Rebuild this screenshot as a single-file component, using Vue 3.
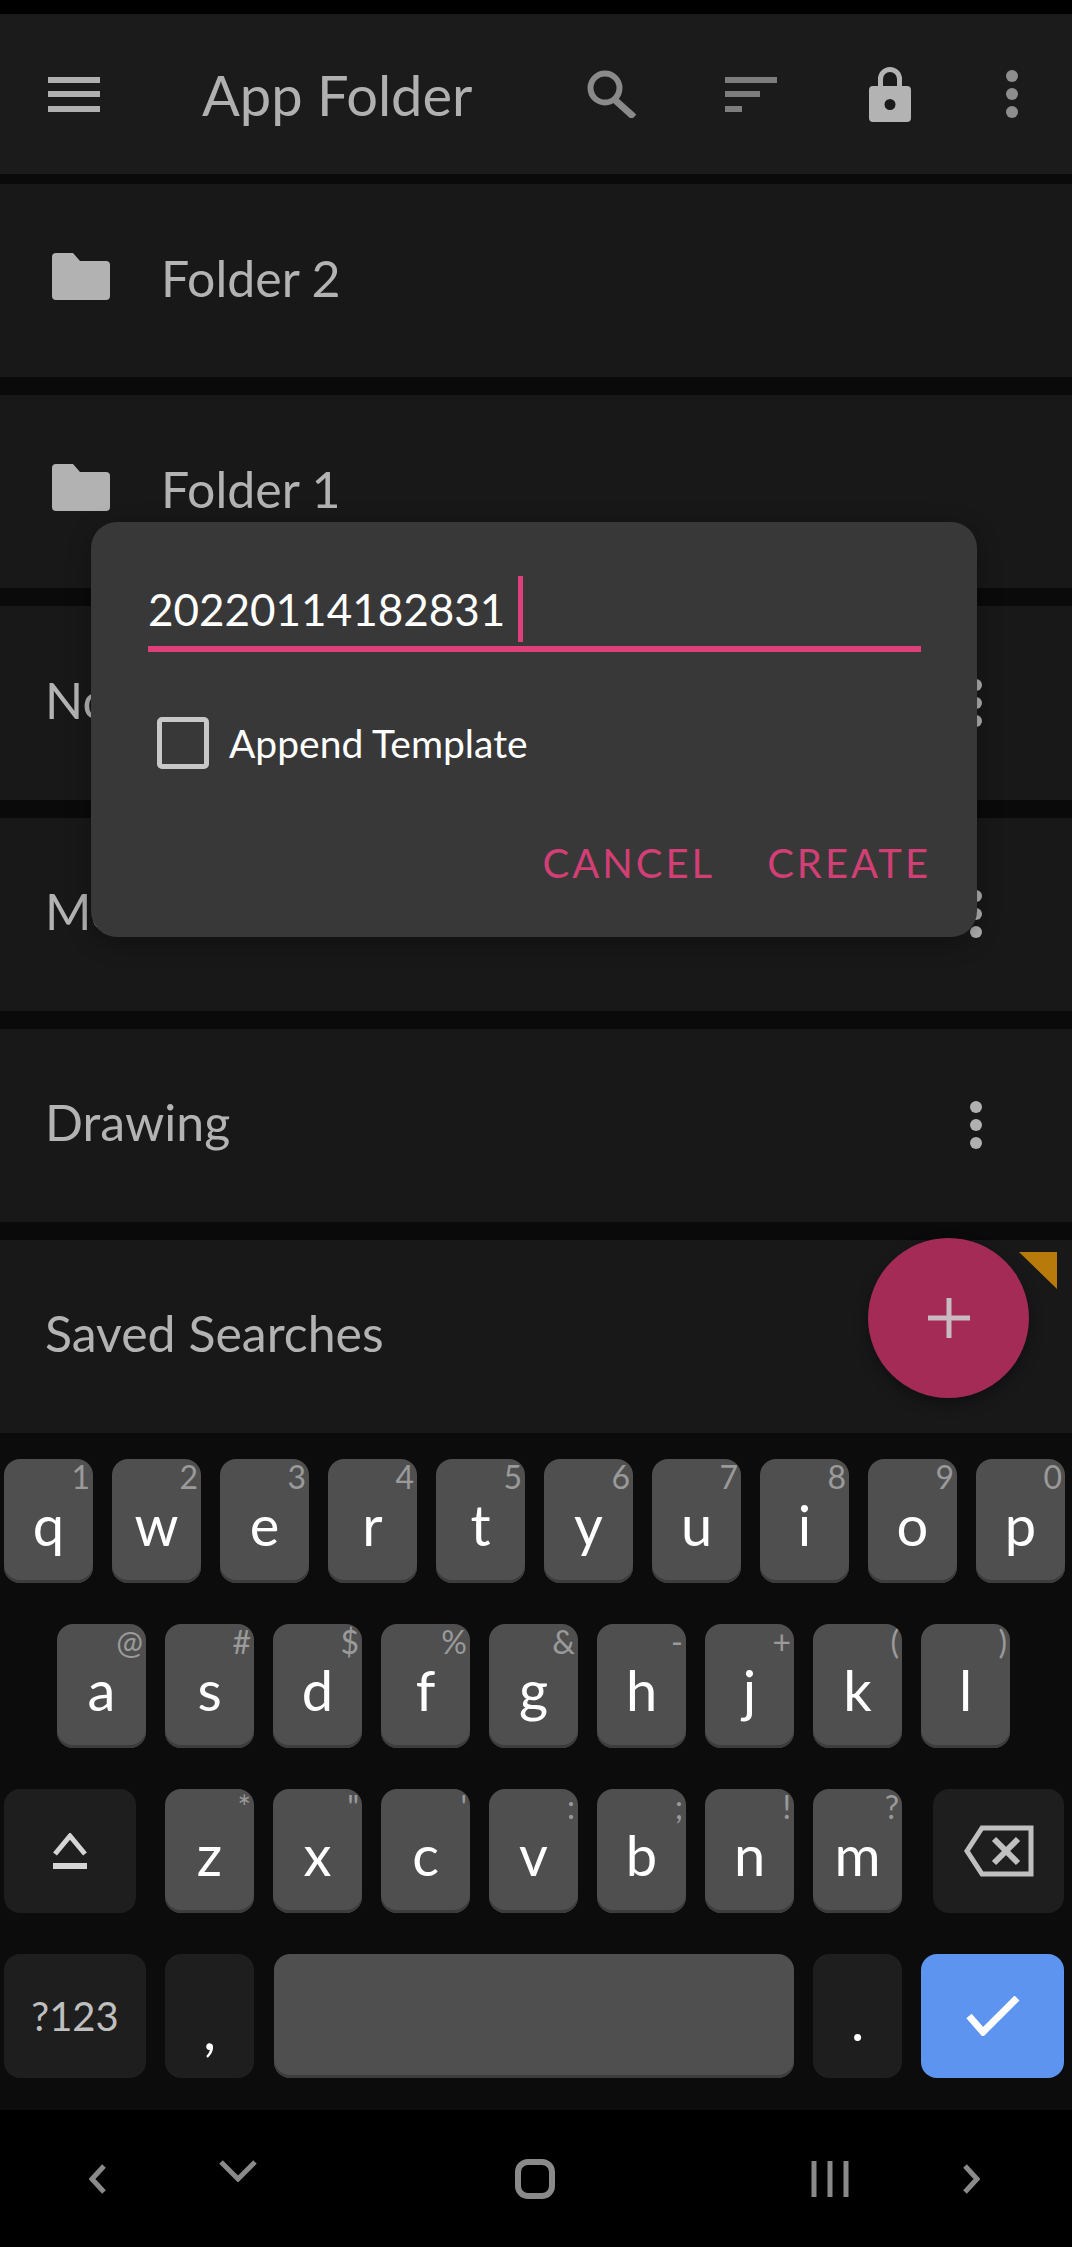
<template>
  <div class="screen">
    <div class="status"></div>

    <header class="appbar">
      <svg class="ic-menu" width="52" height="35" viewBox="0 0 52 35"><path d="M0 0h52v6H0zM0 14h52v6H0zM0 29h52v6H0z" fill="#b0b0b0" /></svg>
      <span class="title">App Folder</span>
      <svg class="ic-search" width="52" height="48" viewBox="0 0 52 48">
        <circle cx="18" cy="18" r="14.5" fill="none" stroke="#8a8a8a" stroke-width="6" />
        <path d="M28 30l19 17" stroke="#8a8a8a" stroke-width="7" fill="none" />
      </svg>
      <svg class="ic-sort" width="52" height="35" viewBox="0 0 52 35"><path d="M0 0h52v6H0zM0 14h35v6H0zM0 29h17v6H0z" fill="#7d7d7d" /></svg>
      <svg class="ic-lock" width="42" height="56" viewBox="0 0 42 56">
        <path fill-rule="evenodd" d="M9 20v-7a12 12 0 0 1 24 0v7h5a4 4 0 0 1 4 4v28a4 4 0 0 1-4 4H4a4 4 0 0 1-4-4V24a4 4 0 0 1 4-4zm5 0h14v-7a7 7 0 0 0-14 0zm7 13a5.500 5.500 0 1 0 0 11 5.500 5.500 0 0 0 0-11z" fill="#b3b3b3" />
      </svg>
      <div class="dots dim"><i></i><i></i><i></i></div>
    </header>

    <main class="list">
      <div v-for="row in rows" :key="row.name" class="card">
        <svg v-if="row.folder" class="ic-folder" width="58" height="47" viewBox="0 0 58 47">
          <path d="M4 0h17l7 8h26a4 4 0 0 1 4 4v31a4 4 0 0 1-4 4H4a4 4 0 0 1-4-4V4a4 4 0 0 1 4-4z" fill="#b2b2b2" />
        </svg>
        <span class="card-name">{{ row.name }}</span>
        <div v-if="!row.folder && row.menu" class="dots card-dots"><i></i><i></i><i></i></div>
      </div>
    </main>

    <div class="keyboard">
      <div class="key-row row-one">
        <div v-for="k in rowOne" :key="k[0]" class="key">
          <span class="hint">{{ k[1] }}</span>
          <span class="letter">{{ k[0] }}</span>
        </div>
      </div>
      <div class="key-row row-two">
        <div v-for="k in rowTwo" :key="k[0]" class="key">
          <span class="hint">{{ k[1] }}</span>
          <span class="letter">{{ k[0] }}</span>
        </div>
      </div>
      <div class="key-row row-three">
        <div class="key dark shift">
          <svg width="34" height="36" viewBox="0 0 34 36">
            <path d="M2 21L17 3l15 18" fill="none" stroke="#d5d5d5" stroke-width="5" />
            <path d="M0 30h34v6H0z" fill="#d5d5d5" />
          </svg>
        </div>
        <div class="letters">
          <div v-for="k in rowThree" :key="k[0]" class="key">
            <span class="hint">{{ k[1] }}</span>
            <span class="letter">{{ k[0] }}</span>
          </div>
        </div>
        <div class="key dark backspace">
          <svg width="70" height="52" viewBox="0 0 70 52">
            <path d="M67 3H18L3 26l15 23h49z" fill="none" stroke="#c0c0c0" stroke-width="5" />
            <path d="M30 14l24 24M54 14L30 38" fill="none" stroke="#c0c0c0" stroke-width="6" />
          </svg>
        </div>
      </div>
      <div class="key-row row-four">
        <div class="key dark sym">?123</div>
        <div class="key dark punct"><span class="mark">,</span></div>
        <div class="key space"></div>
        <div class="key dark punct"><span class="mark period">.</span></div>
        <div class="key enter">
          <svg width="54" height="40" viewBox="0 0 54 40">
            <path d="M3 20l14 16L51 2" fill="none" stroke="#fff" stroke-width="7" />
          </svg>
        </div>
      </div>
    </div>

    <nav class="navbar">
      <svg width="18" height="30" viewBox="0 0 18 30"><path d="M15 2L3 15l12 13" fill="none" stroke="#8a8a8a" stroke-width="5" /></svg>
      <svg class="nav-down" width="38" height="22" viewBox="0 0 38 22"><path d="M2 2l17 17L36 2" fill="none" stroke="#8a8a8a" stroke-width="5" /></svg>
      <svg class="nav-home" width="40" height="40" viewBox="0 0 40 40"><rect x="3" y="3" width="34" height="34" rx="10" fill="none" stroke="#8a8a8a" stroke-width="6" /></svg>
      <svg class="nav-recent" width="38" height="36" viewBox="0 0 38 36"><path d="M3 0v36M19 0v36M35 0v36" stroke="#8a8a8a" stroke-width="5" /></svg>
      <svg class="nav-fwd" width="18" height="30" viewBox="0 0 18 30"><path d="M3 2l12 13L3 28" fill="none" stroke="#8a8a8a" stroke-width="5" /></svg>
    </nav>

    <!-- Overlays -->
    <div class="dialog">
      <div class="field">
        <span class="field-value">20220114182831</span>
        <span class="caret"></span>
      </div>
      <label class="check-row">
        <span class="checkbox"></span>
        <span class="check-label">Append Template</span>
      </label>
      <div class="actions">
        <span class="action">CANCEL</span>
        <span class="action">CREATE</span>
      </div>
    </div>

    <button class="fab">
      <svg width="42" height="40" viewBox="0 0 42 40"><path d="M18.500 0h5v17.500h18.500v5H23.500v17.500h-5V22.500H0v-5h18.500z" fill="#c9b9c0" /></svg>
    </button>
    <svg class="corner" width="38" height="37" viewBox="0 0 38 37"><path d="M0 0h38v37z" fill="#b87a0a" /></svg>
  </div>
</template>

<script setup>
const rows = [
  { name: 'Folder 2', folder: true },
  { name: 'Folder 1', folder: true },
  { name: 'Notes', menu: true },
  { name: 'Mobile', menu: true },
  { name: 'Drawing', menu: true },
  { name: 'Saved Searches' }
]

const rowOne = [['q', '1'], ['w', '2'], ['e', '3'], ['r', '4'], ['t', '5'], ['y', '6'], ['u', '7'], ['i', '8'], ['o', '9'], ['p', '0']]
const rowTwo = [['a', '@'], ['s', '#'], ['d', '$'], ['f', '%'], ['g', '&'], ['h', '-'], ['j', '+'], ['k', '('], ['l', ')']]
const rowThree = [['z', '*'], ['x', '"'], ['c', "'"], ['v', ':'], ['b', ';'], ['n', '!'], ['m', '?']]
</script>

<style>
html, body { margin: 0; background: #000; }
</style>

<style scoped>
.screen {
  position: relative;
  display: flex;
  flex-direction: column;
  width: 1072px;
  height: 2247px;
  overflow: hidden;
  background: #0a0a0a;
  font-family: Lato, sans-serif;
}

.status { height: 14px; background: #000; }

.appbar {
  display: flex;
  align-items: center;
  height: 160px;
  padding: 0 54px 0 48px;
  box-sizing: border-box;
  background: #1b1b1b;
}
.title { margin-left: 102px; font-size: 56px; color: #b0b0b0; flex: 1; }
.ic-search { margin-right: 86px; }
.ic-sort { margin-right: 92px; }
.ic-lock { margin-right: 95px; }

.dots { display: flex; flex-direction: column; gap: 6px; }
.dots i { display: block; width: 12px; height: 12px; border-radius: 50%; background: #b0b0b0; }
.dots.dim i { background: #8e8e8e; }
.card-dots { margin-top: 6px; }

.list {
  display: flex;
  flex-direction: column;
  gap: 18px;
  height: 1249px;
  margin-top: 10px;
}
.card {
  flex: 1;
  display: flex;
  align-items: center;
  padding: 0 90px 6px 45px;
  background: #181818;
}
.ic-folder { margin: 0 51px 2px 7px; }
.card-name { flex: 1; font-size: 50px; color: #b3b3b3; }

.keyboard {
  display: flex;
  flex-direction: column;
  gap: 41px;
  height: 677px;
  padding-top: 26px;
  box-sizing: border-box;
  background: #0c0c0c;
}
.key-row { display: flex; height: 124px; }
.row-one { gap: 19px; padding-left: 4px; }
.row-two { gap: 19px; padding-left: 57px; }
.row-three { padding-left: 4px; }
.row-four { padding-left: 4px; }
.letters { display: flex; gap: 19px; margin: 0 31px 0 29px; }

.key {
  position: relative;
  display: flex;
  align-items: center;
  justify-content: center;
  width: 89px;
  height: 124px;
  border-radius: 16px;
  background: #4f4f4f;
  box-shadow: inset 0 -3px 0 #3c3c3c;
}
.key.dark { background: #1e1e1e; box-shadow: none; }
.shift { width: 132px; box-sizing: border-box; }
.backspace { width: 131px; box-sizing: border-box; }
.hint {
  position: absolute;
  top: 2px;
  right: 3px;
  font-size: 32px;
  line-height: 1;
  color: #9a9a9a;
}
.letter { font-size: 56px; line-height: 1; color: #fff; padding: 8px 0 0; }

.sym { width: 142px; margin-right: 19px; font-size: 40px; color: #bfbfbf; }
.punct { align-items: flex-end; }
.row-four .punct:nth-child(2) { margin-right: 20px; }
.row-four .punct:nth-child(4) { margin-right: 19px; }
.mark { font-size: 56px; color: #fff; padding-bottom: 16px; }
.mark.period { padding-bottom: 25px; }
.space { width: 520px; margin-right: 19px; }
.enter { width: 143px; background: #5c94f0; box-shadow: none; }

.navbar {
  display: flex;
  align-items: center;
  flex: 1;
  padding: 0 0 0 89px;
  background: #000;
}
.nav-down { margin: 0 0 0 112px; transform: translateY(-8px); }
.nav-home { margin-left: 258px; }
.nav-recent { margin-left: 256px; }
.nav-fwd { margin-left: 113px; }

.dialog {
  position: absolute;
  left: 91px;
  top: 522px;
  width: 886px;
  height: 415px;
  padding: 52px 56px 0 57px;
  box-sizing: border-box;
  border-radius: 26px;
  background: #383838;
  box-shadow: 0 6px 24px rgba(0, 0, 0, 0.3);
}
.field {
  display: flex;
  align-items: center;
  height: 72px;
  border-bottom: 6px solid #e0407a;
}
.field-value { font-size: 44px; color: #fff; padding-bottom: 2px; }
.caret { width: 5px; height: 66px; margin: 0 0 3px 13px; background: #e0407a; }
.check-row { display: flex; align-items: center; margin: 65px 0 0 9px; }
.checkbox {
  width: 52px;
  height: 52px;
  box-sizing: border-box;
  border: 5px solid #c8c8c8;
  border-radius: 5px;
}
.check-label { margin-left: 20px; font-size: 39px; color: #fff; }
.actions { display: flex; justify-content: flex-end; gap: 52px; margin: 70px -10px 0 0; }
.action { font-size: 40px; letter-spacing: 3px; color: #d13f74; }

.fab {
  position: absolute;
  left: 868px;
  top: 1238px;
  display: flex;
  align-items: center;
  justify-content: center;
  width: 161px;
  height: 160px;
  padding: 0;
  border: none;
  border-radius: 50%;
  background: #a32b55;
  box-shadow: 0 6px 14px rgba(0, 0, 0, 0.35);
}
.corner { position: absolute; left: 1019px; top: 1252px; }
</style>
